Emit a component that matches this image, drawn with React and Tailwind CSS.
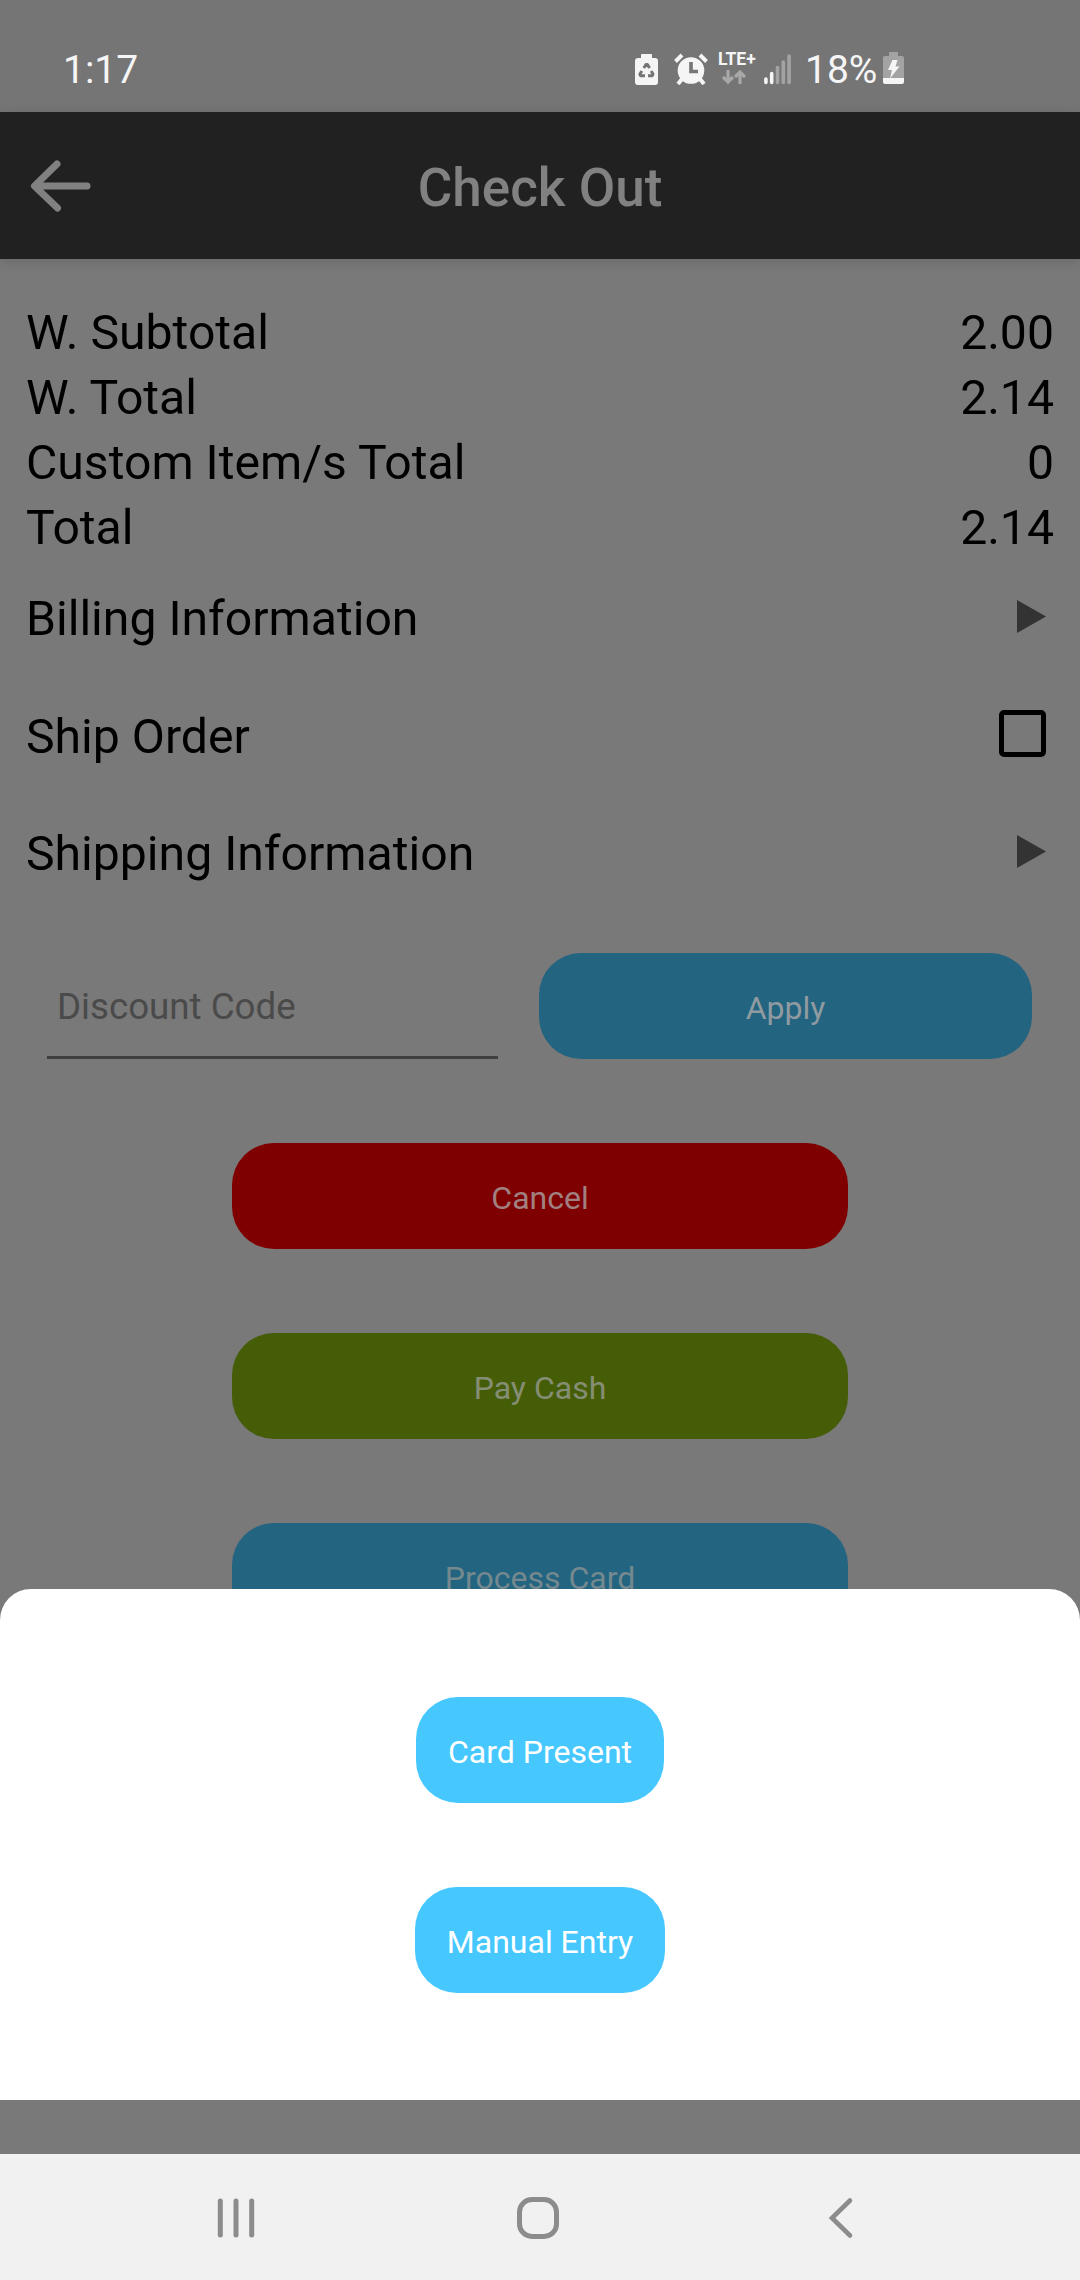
import React from 'react';

const totals = [
  { label: 'W. Subtotal', value: '2.00' },
  { label: 'W. Total', value: '2.14' },
  { label: 'Custom Item/s Total', value: '0' },
  { label: 'Total', value: '2.14' },
];

const StatusBar = () => (
  <div className="h-[112px] flex items-center bg-[#757575] text-[#f5f5f5] pl-[63px] pr-[176px] pt-[27px] text-[39px] leading-[84px]">
    <span>1:17</span>
    <div className="ml-auto flex items-center">
      {/* battery protection */}
      <svg className="-mt-[2px] w-[23px] h-[32px]" viewBox="0 0 23 32">
        <path d="M6 5V2q0-1 1-1h9q1 0 1 1v3h3q3 0 3 3v21q0 3-3 3H3q-3 0-3-3V8q0-3 3-3z" fill="#f5f5f5" />
        <g fill="none" stroke="#757575" strokeWidth="3" strokeLinejoin="round">
          <path d="M8.800 15l2.200-3.500h1.400l2.200 3.500" />
          <path d="M16.200 18l1.800 3.200-.8 1.600H13" />
          <path d="M10 22.800H5.600l-.8-1.600L6.800 18" />
        </g>
      </svg>
      <svg className="-mt-[2px] ml-4 w-[34px] h-[32px]" viewBox="0 0 34 32">
        <circle cx="17" cy="17.500" r="13.300" fill="#f5f5f5" />
        <path d="M1.500 8.500L8 2M32.500 8.500L26 2" stroke="#f5f5f5" strokeWidth="4" />
        <path d="M8 26l-4 5M26 26l4 5" stroke="#f5f5f5" strokeWidth="4" />
        <path d="M17 9v9.500h7" fill="none" stroke="#757575" strokeWidth="3.600" />
      </svg>
      <div className="-mt-[4px] ml-[10px] w-[38px] h-[36px] flex flex-col">
        <span className="text-[17.500px] leading-[18px] font-bold whitespace-nowrap">LTE+</span>
        <svg className="ml-1 mt-[2px] w-[24px] h-[14px] shrink-0" viewBox="0 0 24 14">
          <path d="M6 0v11M1 7l5 5 5-5M18 14V2M13 7l5-5 5 5" fill="none" stroke="#a8a8a8" strokeWidth="3.200" />
        </svg>
      </div>
      <svg className="-mt-[2px] ml-2 w-[27px] h-[32px]" viewBox="0 0 27 32">
        <g strokeWidth="3.600" strokeLinecap="round">
          <path d="M1.900 26v3.500M7.700 20.500v9" stroke="#f5f5f5" />
          <path d="M13.500 14.500v15M19.300 9v20.500M25.100 3v26.500" stroke="#a3a3a3" />
        </g>
      </svg>
      <span className="ml-[14px] w-[78px]">18%</span>
      <svg className="-mt-[4px] w-[21px] h-[33px]" viewBox="0 0 21 33">
        <path d="M6 5V2q0-1 1-1h7q1 0 1 1v3h4q2 0 2 2v20H0V7q0-2 2-2z" fill="#a3a3a3" />
        <path d="M0 27h21v4q0 2-2 2H2q-2 0-2-2z" fill="#f5f5f5" />
        <path d="M9.500 9h5l-2 6.500h4L7 27.500l2-8.500H5z" fill="#f5f5f5" />
      </svg>
    </div>
  </div>
);

const Header = () => (
  <div className="h-[147px] grid grid-cols-[1fr_auto_1fr] items-center bg-[#212121] text-[#818181] shadow-[0_3px_12px_rgba(0,0,0,0.13)]">
    <svg className="ml-[30px] mt-[1px] w-[62px] h-[54px]" viewBox="0 0 62 54" fill="none" stroke="currentColor" strokeWidth="7" strokeLinecap="round" strokeLinejoin="round">
      <path d="M27 5L4.500 27 27.500 49M6 27h51" />
    </svg>
    <h1 className="pt-[4px] text-[53px] leading-[62px] font-medium">Check Out</h1>
    <span />
  </div>
);

const Arrow = () => (
  <svg className="mr-[8px] -mt-[4px] w-[29px] h-[33px]" viewBox="0 0 29 33">
    <path d="M0 0l29 16.500L0 33z" fill="#333333" />
  </svg>
);

const Row = ({ label, children }) => (
  <div className="h-[117.5px] flex items-center justify-between">
    <span>{label}</span>
    {children}
  </div>
);

const Button = ({ className, children }) => (
  <button className={`h-[106px] rounded-[42px] flex items-center justify-center text-[32px] leading-[38px] pt-[3px] ${className}`}>
    {children}
  </button>
);

const BottomSheet = () => (
  <div className="absolute left-0 right-0 top-[1589px] h-[511px] bg-white rounded-t-[31px] flex flex-col items-center pt-[108px] gap-[84px]">
    <Button className="w-[248px] bg-[#46c8ff] text-white">Card Present</Button>
    <Button className="w-[250px] bg-[#46c8ff] text-white">Manual Entry</Button>
  </div>
);

const NavBar = () => (
  <div className="h-[126px] bg-[#f1f1f1] flex items-center pl-[217px] pt-[2px]">
    <svg className="w-[38px] h-[42px]" viewBox="0 0 38 42" stroke="#8c8c8c" strokeWidth="5" strokeLinecap="round">
      <path d="M3.300 4v34M19 4v34M34.700 4v34" />
    </svg>
    <svg className="ml-[262px] w-[42px] h-[42px]" viewBox="0 0 42 42" fill="none" stroke="#8c8c8c" strokeWidth="5">
      <rect x="2.500" y="2.500" width="37" height="37" rx="12.500" />
    </svg>
    <svg className="ml-[269px] w-[26px] h-[42px]" viewBox="0 0 26 42" fill="none" stroke="#8c8c8c" strokeWidth="4.600" strokeLinecap="round">
      <path d="M22 3.500L4 21l18 17.500" />
    </svg>
  </div>
);

const App = () => {
  return (
    <div className="relative w-[1080px] h-[2280px] overflow-hidden flex flex-col bg-[#797979] font-['Roboto',sans-serif]">
      <StatusBar />
      <Header />
      <div className="flex-1 min-h-0 flex flex-col pt-[41px]">
        <div className="px-[26px] text-[48.15px] leading-[65px] text-black">
          {totals.map((item) => (
            <div key={item.label} className="flex justify-between">
              <span>{item.label}</span>
              <span>{item.value}</span>
            </div>
          ))}
          <Row label="Billing Information">
            <Arrow />
          </Row>
          <Row label="Ship Order">
            <span className="mr-[8px] -mt-[6px] w-[47px] h-[47px] border-5 border-black rounded-[5px]" />
          </Row>
          <Row label="Shipping Information">
            <Arrow />
          </Row>
        </div>
        <div className="mt-[40.5px] pl-[47px] flex">
          <div className="w-[451px] h-[106px] border-b-3 border-[#3f3f3f] pl-[10px] pt-[2px] text-[36.700px] leading-[104px] text-[#4a4a4a]">
            Discount Code
          </div>
          <Button className="ml-[41px] w-[493px] bg-[#236480] text-[#8f9ba1]">Apply</Button>
        </div>
        <div className="mt-[84px] flex flex-col items-center gap-[84px]">
          <Button className="w-[616px] shrink-0 bg-[#7f0000] text-[#a18080]">Cancel</Button>
          <Button className="w-[616px] shrink-0 bg-[#465d08] text-[#858e74]">Pay Cash</Button>
          <Button className="w-[616px] shrink-0 bg-[#236480] text-[#74898f]">Process Card</Button>
        </div>
      </div>
      <NavBar />
      <BottomSheet />
    </div>
  );
};

export default App;
